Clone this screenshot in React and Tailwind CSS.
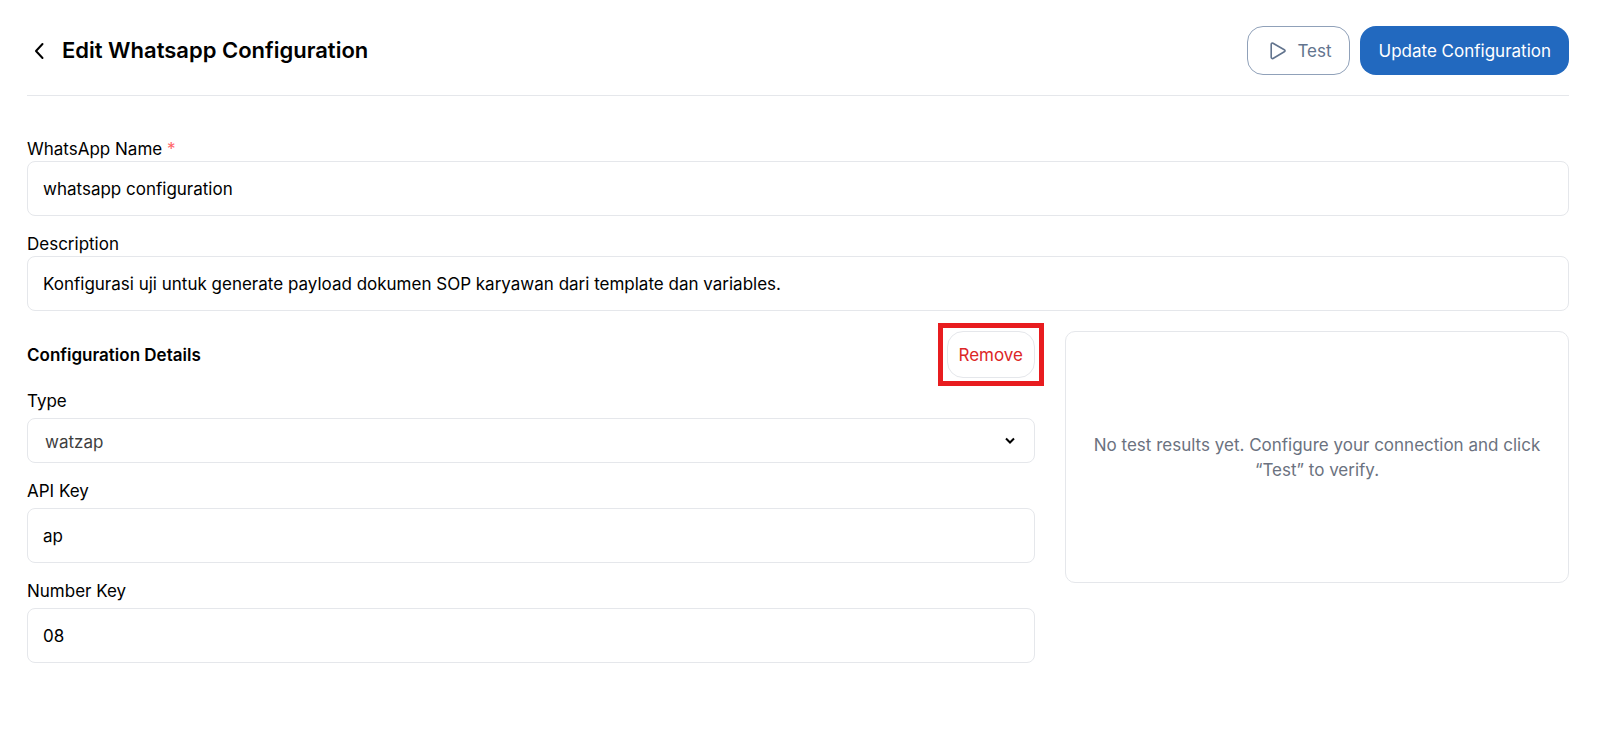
import { useState } from 'react';

const inputClass =
  'block w-full h-[55px] px-[15px] rounded-lg border border-gray-200 bg-white text-[17px] text-black outline-none focus:border-gray-400';
const labelClass = 'block text-[17px] leading-6 text-black';

function ChevronLeft() {
  return (
    <svg width="24" height="24" viewBox="0 0 24 24" fill="none" stroke="currentColor" strokeWidth="2" strokeLinecap="round" strokeLinejoin="round">
      <path d="M15.5 5L9 12l6.5 7" />
    </svg>
  );
}

function PlayIcon() {
  return (
    <svg width="16" height="18" viewBox="0 0 16 18" fill="none" stroke="currentColor" strokeWidth="1.6" strokeLinejoin="round">
      <path d="M1.2 2.4c0-1 1-1.600 1.800-1.200l11.300 6.500c1 .6 1 1.500 0 2.100L3 16.500c-.8.400-1.800-.2-1.800-1.200V2.400z" />
    </svg>
  );
}

export default function App() {
  const [form, setForm] = useState({
    name: 'whatsapp configuration',
    description:
      'Konfigurasi uji untuk generate payload dokumen SOP karyawan dari template dan variables.',
    type: 'watzap',
    apiKey: 'ap',
    numberKey: '08',
  });

  const handleChange = (e) => {
    setForm({ ...form, [e.target.name]: e.target.value });
  };

  return (
    <main className="min-h-screen bg-white pl-[27px] pr-[38px] pt-[26px] pb-10 font-['Inter','Liberation_Sans',sans-serif] text-black">
      <header className="flex items-center justify-between border-b border-gray-200 pb-5">
        <div className="flex items-center gap-[11px]">
          <button type="button" aria-label="Back" className="cursor-pointer">
            <ChevronLeft />
          </button>
          <h1 className="pb-0.5 text-[22px] leading-8 font-semibold">Edit Whatsapp Configuration</h1>
        </div>
        <div className="flex gap-[10px]">
          <button
            type="button"
            className="flex h-[49px] items-center gap-[11px] rounded-2xl border border-slate-400 pl-[22px] pr-[18px] text-[17px] text-slate-500"
          >
            <PlayIcon />
            <span className="pt-0.5">Test</span>
          </button>
          <button
            type="submit"
            form="config-form"
            className="h-[49px] rounded-2xl bg-[#2269bf] px-[18px] pt-0.5 text-[17px] text-white"
          >
            Update Configuration
          </button>
        </div>
      </header>

      <form id="config-form" className="pt-[41px]" onSubmit={(e) => e.preventDefault()}>
        <div className="mb-4">
          <label htmlFor="name" className={labelClass}>
            WhatsApp Name <span className="text-red-400">*</span>
          </label>
          <input id="name" name="name" type="text" value={form.name} onChange={handleChange} className={inputClass} />
        </div>
        <div className="mb-5">
          <label htmlFor="description" className={labelClass}>
            Description
          </label>
          <input
            id="description"
            name="description"
            type="text"
            value={form.description}
            onChange={handleChange}
            className={inputClass}
          />
        </div>

        <div className="grid grid-cols-[2fr_1fr] items-start gap-[30px]">
          <section>
            <div className="mb-[11px] flex items-center justify-between">
              <h2 className="text-[17px] leading-6 font-semibold">Configuration Details</h2>
              <div className="relative">
                <button
                  type="button"
                  className="block h-[47px] rounded-2xl border border-gray-200 px-[11px] pt-0.5 text-[17px] text-[#dc2626]"
                >
                  Remove
                </button>
                {/* highlight frame around the remove action */}
                <span className="pointer-events-none absolute -inset-x-[9px] -inset-y-2 border-[5px] border-[#e81c1f]" />
              </div>
            </div>

            <div className="mb-4">
              <label htmlFor="type" className={`${labelClass} mb-[5px]`}>
                Type
              </label>
              <div className="relative">
                <select
                  id="type"
                  name="type"
                  value={form.type}
                  onChange={handleChange}
                  className="block h-[45px] w-full appearance-none rounded-lg border border-gray-200 bg-white px-[17px] pt-1 text-[17px] text-[#404040] outline-none"
                >
                  <option value="watzap">watzap</option>
                </select>
                <svg
                  className="pointer-events-none absolute right-5 top-1/2 -translate-y-1/2"
                  width="10"
                  height="8"
                  viewBox="0 0 10 8"
                  fill="none"
                  stroke="black"
                  strokeWidth="2"
                >
                  <path d="M1 1.500l4 4 4-4" />
                </svg>
              </div>
            </div>
            <div className="mb-4">
              <label htmlFor="apiKey" className={`${labelClass} mb-[5px]`}>
                API Key
              </label>
              <input id="apiKey" name="apiKey" type="text" value={form.apiKey} onChange={handleChange} className={inputClass} />
            </div>
            <div>
              <label htmlFor="numberKey" className={`${labelClass} mb-[5px]`}>
                Number Key
              </label>
              <input
                id="numberKey"
                name="numberKey"
                type="text"
                value={form.numberKey}
                onChange={handleChange}
                className={inputClass}
              />
            </div>
          </section>

          <aside className="flex min-h-[252px] items-center justify-center rounded-[10px] border border-gray-200 px-5 text-center">
            <p className="pt-0.5 text-[17px] leading-[25px] text-[#6b7280]">
              No test results yet. Configure your connection and click “Test” to verify.
            </p>
          </aside>
        </div>
      </form>
    </main>
  );
}
